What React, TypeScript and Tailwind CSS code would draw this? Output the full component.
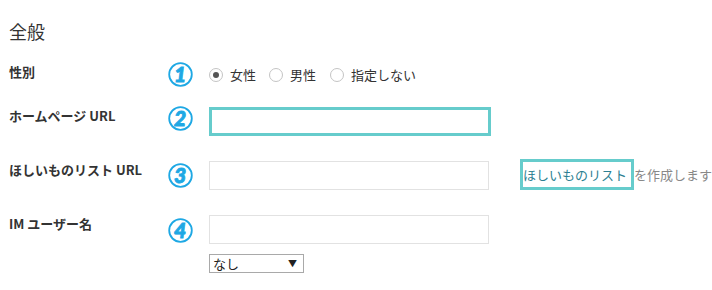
import React from "react";

const jp = { fontFamily: '"Noto Sans CJK JP", "Noto Sans", sans-serif' };

function Num({ n }: { n: string }) {
  return (
    <svg width="25" height="25" viewBox="0 0 25 25">
      <circle cx="12.5" cy="12.5" r="11.3" fill="none" stroke="#1ea8e4" strokeWidth="1.8" />
      <text
        x="12.2"
        y="20.2"
        textAnchor="middle"
        fontSize="21"
        fontWeight="900"
        fontStyle="italic"
        fill="#1ea8e4"
        stroke="#1ea8e4"
        strokeWidth="0.9"
        fontFamily="Lato, 'Open Sans', sans-serif"
      >
        {n}
      </text>
    </svg>
  );
}

function Radio({ checked }: { checked?: boolean }) {
  return (
    <span className="w-[14px] h-[14px] rounded-full border border-[#c4c4c4] bg-white flex items-center justify-center shrink-0">
      {checked && <span className="w-[6px] h-[6px] rounded-full bg-[#555]" />}
    </span>
  );
}

export default function App() {
  return (
    <div className="w-[712px] h-[290px] bg-white pl-[9px] text-[#333]" style={jp}>
      <div className="pt-[19px] text-[18px] leading-[24px]">全般</div>

      {/* Row 1 */}
      <div className="mt-[17px] h-[45px] flex items-start">
        <div className="w-[159px] pt-[2px] text-[13px] font-bold leading-[20px]">性別</div>
        <div className="w-[41px] pt-[2px]">
          <Num n="1" />
        </div>
        <div className="pt-[5px] flex items-center text-[13px] leading-[20px]">
          <Radio checked />
          <span className="ml-[7px]">女性</span>
          <span className="ml-[13px]"><Radio /></span>
          <span className="ml-[7px]">男性</span>
          <span className="ml-[14px]"><Radio /></span>
          <span className="ml-[7px]">指定しない</span>
        </div>
      </div>

      {/* Row 2 */}
      <div className="h-[54px] flex items-start">
        <div className="w-[159px] pt-[1px] text-[13px] font-bold leading-[20px]">ホームページ URL</div>
        <div className="w-[41px] pt-[1px]">
          <Num n="2" />
        </div>
        <div className="mt-[2px] w-[282px] h-[29px] border-[3px] border-[#66cccc] bg-white" />
      </div>

      {/* Row 3 */}
      <div className="h-[54px] flex items-start">
        <div className="w-[159px] pt-[1px] text-[13px] font-bold leading-[20px]">ほしいものリスト URL</div>
        <div className="w-[41px] pt-[4px]">
          <Num n="3" />
        </div>
        <div className="mt-[2px] w-[280px] h-[29px] border border-[#e2e2e2] bg-white" />
        <div className="ml-[31px] flex items-center text-[13px] leading-[20px]">
          <span className="h-[31px] border-[3px] border-[#66cccc] flex items-center pr-[4px] text-[#2d7f92]">
            ほしいものリスト
          </span>
          <span className="text-[#888]">を作成します</span>
        </div>
      </div>

      {/* Row 4 */}
      <div className="flex items-start">
        <div className="w-[159px] pt-[1px] text-[13px] font-bold leading-[20px]">IM ユーザー名</div>
        <div className="w-[41px] pt-[5px]">
          <Num n="4" />
        </div>
        <div className="flex flex-col">
          <div className="mt-[2px] w-[280px] h-[29px] border border-[#e2e2e2] bg-white" />
          <div className="mt-[10px] w-[95px] h-[19px] border border-[#a9a9a9] bg-white flex items-center justify-between pl-[3px] pr-[6px] text-[13px] leading-[17px] text-[#222]">
            <span>なし</span>
            <span className="text-[9px]">▼</span>
          </div>
        </div>
      </div>
    </div>
  );
}
